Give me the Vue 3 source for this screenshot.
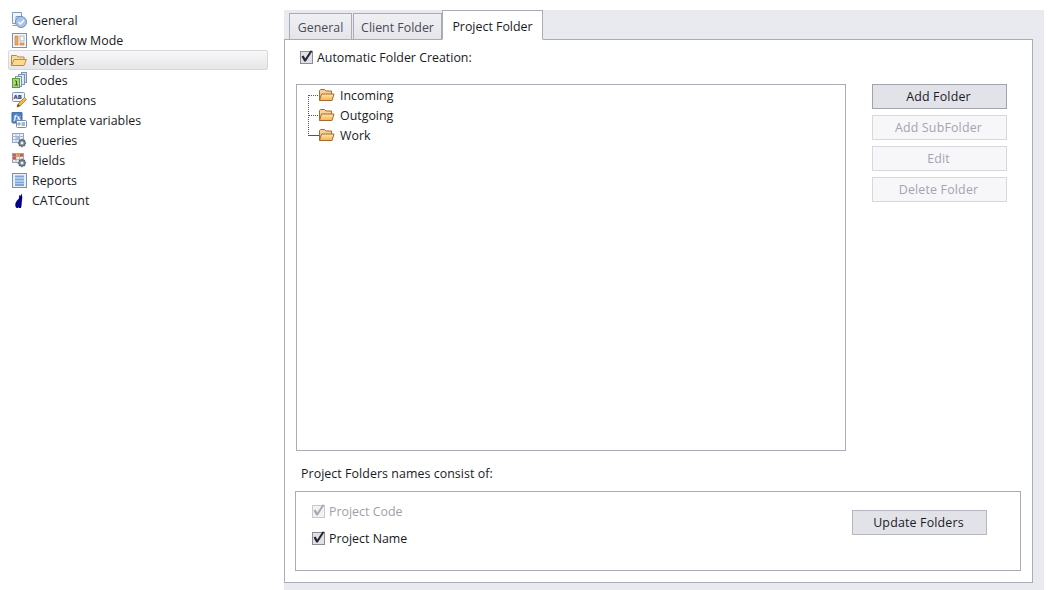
<script setup>
const items = [
  { id: 'general', label: 'General' },
  { id: 'workflow', label: 'Workflow Mode' },
  { id: 'folders', label: 'Folders', active: true },
  { id: 'codes', label: 'Codes' },
  { id: 'salutations', label: 'Salutations' },
  { id: 'template', label: 'Template variables' },
  { id: 'queries', label: 'Queries' },
  { id: 'fields', label: 'Fields' },
  { id: 'reports', label: 'Reports' },
  { id: 'cat', label: 'CATCount' }
]
const tabs = [
  { label: 'General', cls: 'first' },
  { label: 'Client Folder', cls: 'second' },
  { label: 'Project Folder', cls: 'on' }
]
const tree = ['Incoming', 'Outgoing', 'Work']
const buttons = [
  { label: 'Add Folder', primary: true },
  { label: 'Add SubFolder', disabled: true },
  { label: 'Edit', disabled: true },
  { label: 'Delete Folder', disabled: true }
]
const tick = 'M1.500 6.500L3.500 5.500L5.300 8.500L10.500 .5L12.500 1L5.800 11.500H4.300Z'
</script>

<template>
  <div class="app">
    <aside class="side">
      <div v-for="it in items" :key="it.id" class="row" :class="{ active: it.active }">
        <svg class="ico" width="16" height="16" viewBox="0 0 16 16">
          <template v-if="it.id === 'general'">
            <path d="M1.500 .5h9v4H5v7H1.500z" fill="#f2f6fb" stroke="#7f9dc4"/>
            <path d="M1.500 13.500h4" stroke="#7f9dc4"/>
            <circle cx="10" cy="10" r="5.500" fill="#a9c4e6" stroke="#6d8fbd"/>
            <path d="M7.500 10l2 2 3.500-4" fill="none" stroke="#fff" stroke-width="1.400"/>
          </template>
          <template v-else-if="it.id === 'workflow'">
            <rect x="1.500" y="1.500" width="14" height="14" fill="#f4f6fa" stroke="#7d8fb5"/>
            <rect x="4" y="4" width="3" height="9" fill="#f0a860" stroke="#c8742c" stroke-width=".6"/>
            <rect x="9" y="4" width="4" height="5" fill="#fff" stroke="#9aa8c4" stroke-width=".8"/>
            <rect x="9" y="11" width="4" height="2" fill="#f0a860" stroke="#c8742c" stroke-width=".6"/>
          </template>
          <template v-else-if="it.id === 'folders'">
            <path d="M.5 13.500V3.500h5l1.500 1.500h6v2" fill="#f8dca0" stroke="#b78a4a"/>
            <path d="M.5 13.500L3 7.500h12.500l-2.500 6z" fill="#fbd98f" stroke="#c08b3c"/>
          </template>
          <template v-else-if="it.id === 'codes'">
            <rect x="10.500" y=".5" width="5" height="10" fill="#cfdcec" stroke="#7c93b4"/>
            <rect x="7.500" y="2.500" width="6" height="10" fill="#dfe8f3" stroke="#7c93b4"/>
            <rect x="4.500" y="4.500" width="6" height="10" fill="#e9eff7" stroke="#7c93b4"/>
            <rect x="1.500" y="6.500" width="7" height="9" fill="#a8d878" stroke="#5d9a35"/>
            <path d="M4 9h1.500v4M3.500 13h3.500" fill="none" stroke="#2f6b1b"/>
          </template>
          <template v-else-if="it.id === 'salutations'">
            <rect x="1.500" y=".5" width="12" height="9" rx="1" fill="#eef3fa" stroke="#7d93b7"/>
            <text x="2.600" y="7.200" class="mini">AB</text>
            <path d="M6 15l1-3 6.500-6.500 2 2L9 14z" fill="#f1b94a" stroke="#a8772a" stroke-width=".8"/>
            <path d="M6 15l1-3 2 2z" fill="#5b4a35"/>
          </template>
          <template v-else-if="it.id === 'template'">
            <rect x="1" y="0" width="10" height="11" rx="1" fill="#4f80c5" stroke="#3e68a6"/>
            <text x="2.400" y="7.600" class="fx">fx</text>
            <rect x="5.500" y="8.500" width="10" height="7" rx="1" fill="#fff" stroke="#6e8ab2"/>
            <circle cx="8" cy="12" r="1.200" fill="none" stroke="#4f6f9e" stroke-width=".8"/>
            <path d="M10.500 11h3.500M10.500 13h3.500" stroke="#4f6f9e"/>
          </template>
          <template v-else-if="it.id === 'queries' || it.id === 'fields'">
            <rect x="1.500" y="1.500" width="11" height="9" :fill="it.id === 'fields' ? '#f7ead8' : '#eef3fa'" stroke="#94a3bd"/>
            <path d="M1.500 4.500h11M1.500 7.500h11M5 1.500v9M8.500 1.500v9" stroke="#a9b6cc" fill="none"/>
            <template v-if="it.id === 'fields'">
              <rect x="2" y="2" width="3" height="2.500" fill="#d9583e"/>
              <rect x="5.500" y="2" width="3" height="2.500" fill="#e8963c"/>
              <rect x="2" y="5" width="3" height="2.500" fill="#d9583e"/>
              <rect x="9" y="2" width="3" height="2.500" fill="#d9583e"/>
            </template>
            <rect v-else x="5.500" y="5" width="3" height="2.500" fill="#8cc0e8"/>
            <circle cx="11" cy="11" r="3.300" fill="#8d97a5" stroke="#5c6675"/>
            <path d="M11 6.800v2M11 13.200v2M6.800 11h2M13.200 11h2M8 8l1.400 1.400M12.600 12.600L14 14M14 8l-1.400 1.400M9.400 12.600L8 14" stroke="#5c6675" stroke-width="1.200"/>
            <circle cx="11" cy="11" r="1.300" fill="#eef1f5"/>
          </template>
          <template v-else-if="it.id === 'reports'">
            <rect x="1.500" y="1.500" width="14" height="14" fill="#e9eff8" stroke="#7f90ad"/>
            <path d="M4 4.500h9M4 7.500h9M4 10.500h9M4 13h9" stroke="#7ea6d8" stroke-width="1.800"/>
          </template>
          <template v-else>
            <path d="M5 15.500C3.800 14 4 11 6 8.500c.6-.8 1.500-1.500 2-2.300L8.300 3 9.500 4l.9-2.500.8 2.700c.3 2-.2 3.500-.4 5.300-.2 2.200.1 4-.9 6.500H8l-.5-1-.7 1.500z" fill="#00008b"/>
          </template>
        </svg>
        <span>{{ it.label }}</span>
      </div>
    </aside>

    <main class="panel">
      <div class="tabs">
        <div v-for="t in tabs" :key="t.label" class="tab" :class="t.cls">{{ t.label }}</div>
      </div>
      <div class="body">
        <label class="check auto">
          <span class="box"><svg width="13" height="13" viewBox="0 0 13 13"><path :d="tick" fill="#26262e"/></svg></span>
          Automatic Folder Creation:
        </label>

        <div class="mid">
          <div class="treebox">
            <div class="lines"></div>
            <div v-for="n in tree" :key="n" class="node">
              <svg width="17" height="14" viewBox="0 0 17 14">
                <defs>
                  <linearGradient id="fold" x1="0" y1="0" x2="0" y2="1">
                    <stop offset="0" stop-color="#fde7ae"/>
                    <stop offset="1" stop-color="#f2b455"/>
                  </linearGradient>
                </defs>
                <path d="M1.500 12.500V2.500l1-1h4l1.500 1.500h5.500v3" fill="#f4d29a" stroke="#a9682c"/>
                <path d="M1.500 12.500L3.500 6h12.500l-2 6.500z" fill="url(#fold)" stroke="#a9682c"/>
              </svg>
              <span>{{ n }}</span>
            </div>
          </div>
          <div class="actions">
            <div v-for="b in buttons" :key="b.label" class="btn" :class="{ primary: b.primary, off: b.disabled }">{{ b.label }}</div>
          </div>
        </div>

        <div class="caption">Project Folders names consist of:</div>

        <div class="group">
          <div class="checks">
            <label class="check off">
              <span class="box"><svg width="13" height="13" viewBox="0 0 13 13"><path :d="tick" fill="#a9a9b3"/></svg></span>
              Project Code
            </label>
            <label class="check">
              <span class="box"><svg width="13" height="13" viewBox="0 0 13 13"><path :d="tick" fill="#26262e"/></svg></span>
              Project Name
            </label>
          </div>
          <div class="btn update">Update Folders</div>
        </div>
      </div>
    </main>
  </div>
</template>

<style>
html, body { margin: 0; background: #fff; overflow: hidden; }
</style>

<style scoped>
.app {
  display: flex;
  width: 1048px;
  height: 590px;
  font-family: "Open Sans", "Noto Sans", sans-serif;
  font-size: 12.4px;
  color: #1a1a26;
  background: #fff;
}
.side {
  width: 260px;
  margin-right: 16px;
  padding: 10px 0 0 8px;
}
.row {
  display: flex;
  align-items: center;
  height: 20px;
  box-sizing: border-box;
  padding-left: 3px;
  gap: 5px;
  border: 1px solid transparent;
  border-left: 0;
  border-right: 0;
}
.row.active {
  background: linear-gradient(#f8f8f9, #e6e6e8);
  border: 1px solid #d8d8dc;
  border-radius: 2px;
  padding-left: 2px;
}
.ico { flex: none; }
.mini { font: bold 5.500px "DejaVu Sans", sans-serif; fill: #33476b; }
.fx { font: italic bold 7px "DejaVu Serif", serif; fill: #fff; }
.panel {
  width: 760px;
  margin-top: 10px;
  background: #e9eaef;
  display: flex;
  flex-direction: column;
  height: 580px;
}
.tabs {
  display: flex;
  align-items: flex-end;
  height: 30px;
  padding-left: 5px;
  box-sizing: border-box;
  margin-bottom: -1px;
  position: relative;
  z-index: 1;
}
.tab {
  height: 27px;
  box-sizing: border-box;
  padding-top: 3px;
  border: 1px solid #a9abb7;
  background: linear-gradient(#f0f0f3, #e4e5ea);
  color: #4a4a58;
  display: flex;
  align-items: center;
  justify-content: center;
  line-height: 1;
  flex: none;
}
.tab.first { width: 63px; margin-right: 1px; }
.tab.second { width: 89px; }
.tab.on {
  width: 101px;
  height: 30px;
  padding-top: 4px;
  background: #fff;
  color: #1a1a26;
  border-bottom-color: #fff;
}
.body {
  width: 749px;
  height: 544px;
  box-sizing: border-box;
  border: 1px solid #a9abb7;
  background: #fff;
  padding: 0 10px 0 11px;
}
.check {
  display: flex;
  align-items: center;
  gap: 4px;
  height: 14px;
}
.check.off { color: #a0a0aa; }
.box {
  width: 13px;
  height: 13px;
  box-sizing: border-box;
  border: 1px solid #8c8c98;
  background: #dfe0e8;
  display: block;
  position: relative;
  flex: none;
}
.box svg { position: absolute; left: -1px; top: -2px; }
.check.off .box { border-color: #c8c8d0; background: #f2f2f5; }
.auto { margin: 10px 0 0 4px; }
.mid {
  display: flex;
  margin-top: 20px;
}
.treebox {
  width: 550px;
  height: 367px;
  box-sizing: border-box;
  border: 1px solid #a9abb7;
  position: relative;
}
.lines {
  position: absolute;
  left: 11px;
  top: 10px;
  width: 10px;
  height: 40px;
  border-left: 1px dotted #555;
  border-bottom: 1px dotted #555;
}
.node {
  display: flex;
  align-items: center;
  height: 20px;
  padding-left: 21px;
  gap: 5px;
  position: relative;
}
.node::before {
  content: "";
  position: absolute;
  left: 11px;
  top: 10px;
  width: 10px;
  border-top: 1px dotted #555;
}
.actions {
  margin-left: 26px;
  width: 135px;
  display: flex;
  flex-direction: column;
  gap: 6px;
}
.btn {
  height: 25px;
  width: 135px;
  box-sizing: border-box;
  border: 1px solid #b4b6c2;
  background: #e2e3e9;
  display: flex;
  align-items: center;
  justify-content: center;
  flex: none;
  letter-spacing: .18px;
  padding-right: 2px;
}
.btn.primary { border-color: #a0a2ae; }
.btn.off { background: #f7f7fa; border-color: #d6d7df; color: #a4a4b0; }
.caption {
  margin: 15px 0 0 5px;
  height: 16px;
  line-height: 16px;
  letter-spacing: .06px;
}
.group {
  width: 726px;
  height: 80px;
  box-sizing: border-box;
  border: 1px solid #a9abb7;
  margin-top: 9px;
  margin-left: -1px;
  display: flex;
}
.checks {
  padding: 12px 0 0 16px;
  display: flex;
  flex-direction: column;
  gap: 13px;
}
.update { margin: 18px 33px 0 auto; }
</style>
